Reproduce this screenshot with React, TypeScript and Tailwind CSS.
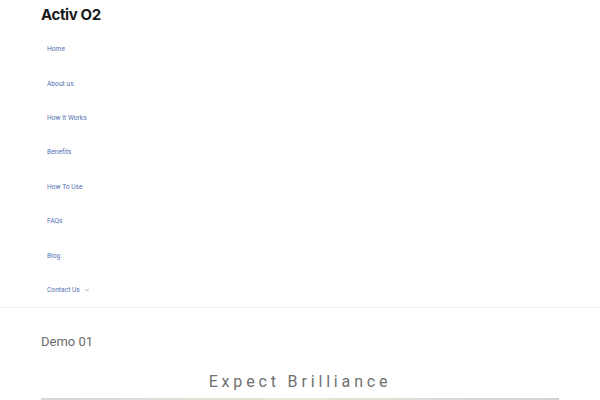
const links = ["Home", "About us", "How It Works", "Benefits", "How To Use", "FAQs", "Blog"];

export default function App() {
  return (
    <div className="min-h-screen bg-white" style={{ fontFamily: "Roboto, 'Liberation Sans', sans-serif" }}>
      <header className="border-b border-[#f0f0f0] px-[41px]">
        <div className="pt-[3px] text-[15px] font-bold leading-[24px] tracking-[-0.025em] text-[#1a1a1a]" style={{ fontFamily: "Inter, 'Liberation Sans', sans-serif" }}>
          Activ O2
        </div>
        <ul className="mt-[5px]">
          {links.map((l) => (
            <li key={l} className="flex h-[34.4px] items-center px-[6px] text-[6.7px] text-[#5672b3]">
              {l}
            </li>
          ))}
          <li className="flex h-[34.4px] items-center gap-[4px] px-[6px] text-[6.7px] text-[#5672b3]">
            Contact Us
            <svg width="6" height="6" viewBox="0 0 24 24" fill="none" stroke="#7a8aae" strokeWidth="3" strokeLinecap="round" strokeLinejoin="round">
              <path d="M6 9l6 6 6-6" />
            </svg>
          </li>
        </ul>
      </header>
      <main className="px-[41px]">
        <h1 className="mt-[24px] text-[13px] font-normal leading-[20px] text-[#6b6b6b]">Demo 01</h1>
        <h2 className="mt-[18px] text-center text-[16px] font-normal leading-[24px] tracking-[0.24em] text-[#707070]">
          Expect Brilliance
        </h2>
        <div className="mt-[4px] h-[200px] w-full bg-[linear-gradient(90deg,#d3d9d6_0%,#dbe2d6_30%,#e0ebd2_50%,#d7ded6_75%,#d0d5d3_100%)]" />
      </main>
    </div>
  );
}
